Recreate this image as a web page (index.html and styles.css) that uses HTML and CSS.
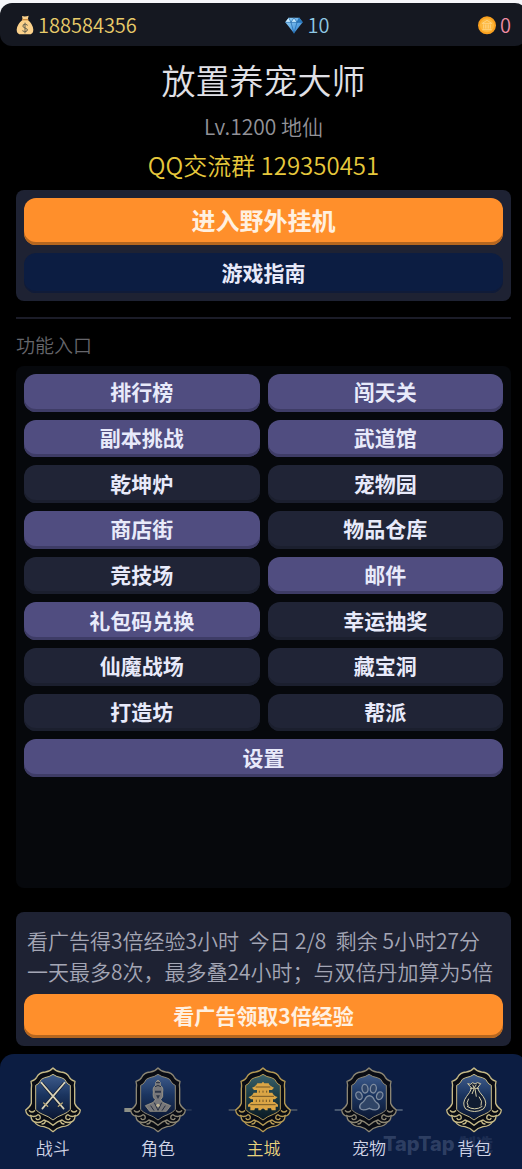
FILE: index.html
```
<!DOCTYPE html>
<html lang="zh-CN">
<head>
  <meta charset="UTF-8">
  <meta name="viewport" content="width=device-width, initial-scale=1.0">
  <link rel="stylesheet" href="styles.css">
  <title>放置养宠大师</title>
</head>
<body>
  <!-- shared badge frame for the bottom tabs -->
  <svg class="defs" width="0" height="0" aria-hidden="true">
    <defs>
      <linearGradient id="blue" x1="0" y1="0" x2="0" y2="1">
        <stop offset="0" stop-color="#3f5c8c"/>
        <stop offset="0.45" stop-color="#1b3560"/>
        <stop offset="1" stop-color="#0a1530"/>
      </linearGradient>
      <linearGradient id="teal" x1="0" y1="0" x2="0" y2="1">
        <stop offset="0" stop-color="#3a6068"/>
        <stop offset="0.5" stop-color="#1a3a44"/>
        <stop offset="1" stop-color="#0a1822"/>
      </linearGradient>
      <linearGradient id="gem" x1="0" y1="0" x2="1" y2="1">
        <stop offset="0" stop-color="#9ed8fb"/>
        <stop offset="1" stop-color="#2b7fd0"/>
      </linearGradient>
      <symbol id="frame" viewBox="0 0 210 204">
        <path fill="#090c14" stroke="currentColor" stroke-width="4" stroke-linejoin="round" d="M105 6 Q113 16 128 18 Q148 20 154 34 Q158 42 171 46 Q168 56 170 68 V112 Q174 124 187 132 Q185 148 171 151 Q170 164 160 168 Q153 181 132 182 Q116 186 105 197 Q94 186 78 182 Q57 181 50 168 Q40 164 39 151 Q25 148 23 132 Q36 124 40 112 V68 Q42 56 39 46 Q52 42 56 34 Q62 20 82 18 Q97 16 105 6Z"/>
        <path stroke="currentColor" stroke-width="3" d="M105 25 Q116 33 130 35 Q142 38 145 48 Q149 55 157 58 V130 Q150 140 136 145 Q118 151 105 162 Q92 151 74 145 Q60 140 53 130 V58 Q61 55 65 48 Q68 38 80 35 Q94 33 105 25Z"/>
        <path fill="none" stroke="currentColor" stroke-width="4" stroke-linecap="round" d="M37 148 Q48 156 60 146 Q69 149 66 158 Q58 164 54 157 M48 167 Q65 174 78 162 Q91 165 105 178 Q119 165 132 162 Q145 174 162 167 M173 148 Q162 156 150 146 Q141 149 144 158 Q152 164 156 157 M34 134 Q42 142 50 134 M176 134 Q168 142 160 134 M82 166 Q80 174 72 174 M128 166 Q130 174 138 174"/>
      </symbol>
    </defs>
  </svg>

  <div class="app">
    <header class="top">
      <div class="wallet">
        <span class="coin gold">
          <svg viewBox="0 0 54 60" aria-hidden="true">
            <path fill="#fbd18b" d="M18 3 Q27 6 38 2 L35 14 Q51 27 52 44 Q52 58 38 58 H16 Q2 58 2 44 Q3 27 20 14Z"/>
            <path fill="none" stroke="#c98a3c" stroke-width="4" d="M18 14 H37"/>
            <path fill="none" stroke="#65604e" stroke-width="3" d="M35 31 Q29 25 22 29 Q17 36 27 39 Q38 42 33 48 Q26 53 19 47 M27 23 V55"/>
          </svg>
          188584356
        </span>
        <span class="coin gems">
          <svg viewBox="0 0 54 60" aria-hidden="true">
            <path fill="url(#gem)" d="M11 8 H43 L53 22 L27 55 L1 22Z"/>
            <path fill="#c5eaff" d="M11 8 L18 22 H1Z M27 8 L18 22 H36Z"/>
            <path fill="#2778bd" d="M43 8 L36 22 H53Z"/>
            <path fill="none" stroke="#1d65a7" stroke-width="2" d="M1 22 H53 M18 22 L27 55 L36 22 M11 8 L18 22 L27 8 L36 22 L43 8"/>
          </svg>
          10
        </span>
        <span class="coin tickets">
          <svg viewBox="0 0 54 60" aria-hidden="true">
            <circle cx="27" cy="31" r="27" fill="#f9a01f"/>
            <circle cx="27" cy="31" r="21" fill="#fdb73c"/>
            <path fill="none" stroke="#ffe0a0" stroke-width="2" d="M13 25 L27 16 L41 25Z M17 28 V41 M22 28 V41 M27 28 V41 M32 28 V41 M37 28 V41 M13 44 H41"/>
          </svg>
          0
        </span>
      </div>
    </header>

    <main class="content">
      <h1 class="title">放置养宠大师</h1>
      <p class="level">Lv.1200 地仙</p>
      <p class="group">QQ交流群 129350451</p>

      <section class="panel start">
        <button class="btn orange big">进入野外挂机</button>
        <button class="btn navy">游戏指南</button>
      </section>

      <hr class="line">
      <h2 class="label">功能入口</h2>

      <section class="entries">
        <div class="grid">
          <button class="btn purple">排行榜</button>
          <button class="btn purple">闯天关</button>
          <button class="btn purple">副本挑战</button>
          <button class="btn purple">武道馆</button>
          <button class="btn dark">乾坤炉</button>
          <button class="btn dark">宠物园</button>
          <button class="btn purple">商店街</button>
          <button class="btn dark">物品仓库</button>
          <button class="btn dark">竞技场</button>
          <button class="btn purple">邮件</button>
          <button class="btn purple">礼包码兑换</button>
          <button class="btn dark">幸运抽奖</button>
          <button class="btn dark">仙魔战场</button>
          <button class="btn dark">藏宝洞</button>
          <button class="btn dark">打造坊</button>
          <button class="btn dark">帮派</button>
          <button class="btn purple wide">设置</button>
        </div>
      </section>

      <section class="panel ad">
        <p class="ad-text">看广告得3倍经验3小时&nbsp; 今日 2/8&nbsp; 剩余 5小时27分</p>
        <p class="ad-text">一天最多8次，最多叠24小时；与双倍丹加算为5倍</p>
        <button class="btn orange">看广告领取3倍经验</button>
      </section>
    </main>

    <nav class="tabs">
      <a class="tab bright" href="#battle">
        <svg viewBox="0 0 210 204" aria-hidden="true">
          <use href="#frame" fill="url(#blue)"/>
          <path fill="none" stroke="#11182a" stroke-width="9" d="M72 52 L131 122 M138 52 L79 122"/>
          <path fill="none" stroke="#d9d3b8" stroke-width="5" stroke-linecap="round" d="M70 50 L137 128 M140 50 L73 128"/>
          <path fill="none" stroke="#b8a878" stroke-width="4" stroke-linecap="round" d="M121 121 L133 111 M89 121 L77 111"/>
        </svg>
        战斗
      </a>
      <a class="tab" href="#role">
        <svg viewBox="0 0 210 204" aria-hidden="true">
          <path fill="#8d9087" d="M4 126 H32 V138 H4Z"/>
          <path stroke="#4c5a70" stroke-width="2" d="M180 132 H206"/>
          <use href="#frame" fill="url(#blue)"/>
          <path fill="#77777a" stroke="#b0a78f" stroke-width="2" d="M105 42 Q114 46 112 58 Q122 64 119 78 Q122 94 113 101 L119 109 L143 119 L130 136 H80 L67 119 L91 109 L97 101 Q88 94 91 78 Q88 64 98 58 Q96 46 105 42Z"/>
          <path fill="#2e3748" d="M96 74 H114 V80 H96Z M99 88 H111 L105 99Z"/>
          <path fill="none" stroke="#252e40" stroke-width="3" d="M96 62 Q105 55 114 62 M99 50 H111 M94 110 L105 133 L116 110 M83 119 L93 134 M127 119 L117 134"/>
          <circle cx="105" cy="118" r="5" fill="#c1b696"/>
        </svg>
        角色
      </a>
      <a class="tab active" href="#city">
        <svg viewBox="0 0 210 204" aria-hidden="true">
          <path stroke="#4f5a68" stroke-width="4" d="M2 132 H32 M178 132 H208"/>
          <use href="#frame" fill="url(#teal)"/>
          <path fill="#dba545" d="M101 52 L105 47 L109 52 H122 Q125 61 138 65 L132 72 H78 L72 65 Q85 61 88 52Z M87 72 H123 V82 H87Z M77 80 H133 Q137 90 149 93 L141 100 H69 L61 93 Q73 90 77 80Z M75 100 H135 V110 H75Z M70 108 H140 L150 116 V122 H60 V116Z M67 122 H143 V133 H131 L129 127 H119 V133 H112 Q105 122 98 133 H91 V127 H81 L79 133 H67Z"/>
          <path fill="none" stroke="#3d3118" stroke-width="2" d="M83 63 H127 M94 74 V80 M105 74 V80 M116 74 V80 M72 91 H138 M85 101 V108 M95 101 V108 M105 101 V108 M115 101 V108 M125 101 V108 M67 116 H143"/>
        </svg>
        主城
      </a>
      <a class="tab" href="#pet">
        <svg viewBox="0 0 210 204" aria-hidden="true">
          <path stroke="#46566f" stroke-width="6" d="M2 132 H32 M178 132 H206"/>
          <use href="#frame" fill="url(#blue)"/>
          <g fill="#2f4466" stroke="#7e8ca0" stroke-width="4">
            <ellipse cx="75" cy="89" rx="9" ry="12" transform="rotate(-25 75 89)"/>
            <ellipse cx="93" cy="68" rx="9" ry="13" transform="rotate(-8 93 68)"/>
            <ellipse cx="118" cy="68" rx="9" ry="13" transform="rotate(8 118 68)"/>
            <ellipse cx="137" cy="89" rx="9" ry="12" transform="rotate(25 137 89)"/>
            <path d="M106 89 Q117 91 121 102 Q124 108 132 113 Q139 121 133 128 Q126 136 106 127 Q86 136 79 128 Q74 121 81 113 Q89 108 92 102 Q96 91 106 89Z"/>
          </g>
        </svg>
        宠物
      </a>
      <a class="tab bright" href="#bag">
        <svg viewBox="0 0 210 204" aria-hidden="true">
          <use href="#frame" fill="url(#blue)"/>
          <path fill="#101b31" stroke="#d4cda8" stroke-width="3" stroke-linejoin="round" d="M98 66 L86 53 L95 55 L101 50 L108 54 L115 50 L125 53 L115 66 Q120 78 132 91 Q148 113 133 129 Q107 144 80 129 Q67 112 83 91 Q93 80 98 66Z"/>
          <path fill="none" stroke="#d4cda8" stroke-width="3" d="M93 67 H120 M105 69 L99 84 M108 69 L112 92 M101 56 L105 66 L112 56 M84 121 Q107 136 130 121 M89 98 Q80 111 88 121 M120 92 Q132 106 126 119"/>
        </svg>
        背包
      </a>
      <span class="watermark">TapTap <small>制造</small></span>
    </nav>
  </div>
</body>
</html>
```
FILE: styles.css
```
* {
  box-sizing: border-box;
}

body {
  margin: 0;
  background-color: #000;
  color: #e0e0e6;
  font-family: 'Noto Sans CJK SC', sans-serif;
  font-weight: 350;
  overflow-x: hidden;
}

h1, h2, p {
  margin: 0;
  font-weight: inherit;
}

.defs {
  position: absolute;
}

.app {
  display: flex;
  flex-direction: column;
  min-height: 100vh;
  margin-right: -5px;
}

/* currency bar */
.top {
  padding-top: 3px;
  background: linear-gradient(#f5f6fa 50%, #000 50%);
}

.wallet {
  display: flex;
  justify-content: space-between;
  align-items: center;
  height: 43px;
  padding: 0 16px;
  border-radius: 12px;
  background-color: #151821;
  font-size: 20px;
}

.coin {
  display: flex;
  align-items: center;
  gap: 4px;
}

.coin svg {
  width: 18px;
  height: 20px;
}

.gold {
  color: #e8cb6a;
}

.gems {
  color: #8fc8e4;
}

.tickets {
  color: #f08ca4;
}

.content {
  flex: 1;
  display: flex;
  flex-direction: column;
  padding: 9px 16px 8px;
}

.title {
  font-size: 34px;
  line-height: 50px;
  text-align: center;
}

.level {
  font-size: 21px;
  line-height: 42px;
  text-align: center;
  color: #929298;
}

.group {
  font-size: 24px;
  line-height: 36px;
  text-align: center;
  color: #e6c83c;
}

.panel {
  display: flex;
  flex-direction: column;
  padding: 8px;
  border-radius: 8px;
  background-color: #1e2233;
}

.start {
  gap: 8px;
  margin-top: 7px;
}

.btn {
  padding: 0 0 3px;
  border: none;
  border-radius: 12px;
  color: #e8eafa;
  font-family: inherit;
  font-size: 21px;
  font-weight: 700;
  line-height: 30px;
  cursor: pointer;
}

.orange {
  height: 44px;
  color: #fff0e0;
  background-color: #ff8f2b;
  box-shadow: inset 0 -3px #b5661f;
}

.big {
  height: 47px;
  font-size: 24px;
}

.navy {
  height: 40px;
  background-color: #0c1d42;
  box-shadow: inset 0 -2px #101b38;
}

.purple {
  background-color: #504d80;
  box-shadow: inset 0 -3px #3e3c66;
}

.dark {
  background-color: #202436;
  box-shadow: inset 0 -3px #1b1f2e;
}

.line {
  width: 100%;
  height: 2px;
  margin: 16px 0 11px;
  border: none;
  background-color: #1b1c28;
}

.label {
  font-size: 19px;
  line-height: 30px;
  color: #66666b;
}

.entries {
  flex: 1;
  margin: 6px 0 24px;
  padding: 8px;
  border-radius: 8px;
  background-color: #06080c;
}

.grid {
  display: grid;
  grid-template-columns: 1fr 1fr;
  grid-auto-rows: 1fr;
  gap: 8px;
  height: 403px;
}

.wide {
  grid-column: 1 / 3;
}

.ad-text {
  padding: 0 3px;
  font-size: 21px;
  line-height: 31px;
  color: #a4a6b5;
  white-space: nowrap;
}

.ad .ad-text:first-child {
  padding-top: 5px;
}

.ad .btn {
  margin-top: 7px;
}

/* bottom tabs */
.tabs {
  position: relative;
  display: grid;
  grid-template-columns: repeat(5, 1fr);
  height: 115px;
  padding-top: 12px;
  border-radius: 14px 14px 0 0;
  background-color: #0c1d42;
}

.tab {
  display: flex;
  flex-direction: column;
  align-items: center;
  color: #d0d4e6;
  font-size: 17px;
  line-height: 28px;
  text-decoration: none;
}

.tab svg {
  width: 70px;
  height: 68px;
  color: #8c8674;
}

.tab.bright svg {
  color: #c6ba88;
}

.tab.active {
  color: #e8d27c;
}

.tab.active svg {
  color: #b59a55;
}

.watermark {
  position: absolute;
  right: 34px;
  bottom: 13px;
  color: rgba(190, 205, 240, 0.2);
  font-family: Inter, sans-serif;
  font-size: 20px;
  font-weight: 800;
  line-height: 24px;
  pointer-events: none;
}

.watermark small {
  font-family: 'Noto Sans CJK SC', sans-serif;
  font-size: 17px;
  opacity: 0.5;
}
```
